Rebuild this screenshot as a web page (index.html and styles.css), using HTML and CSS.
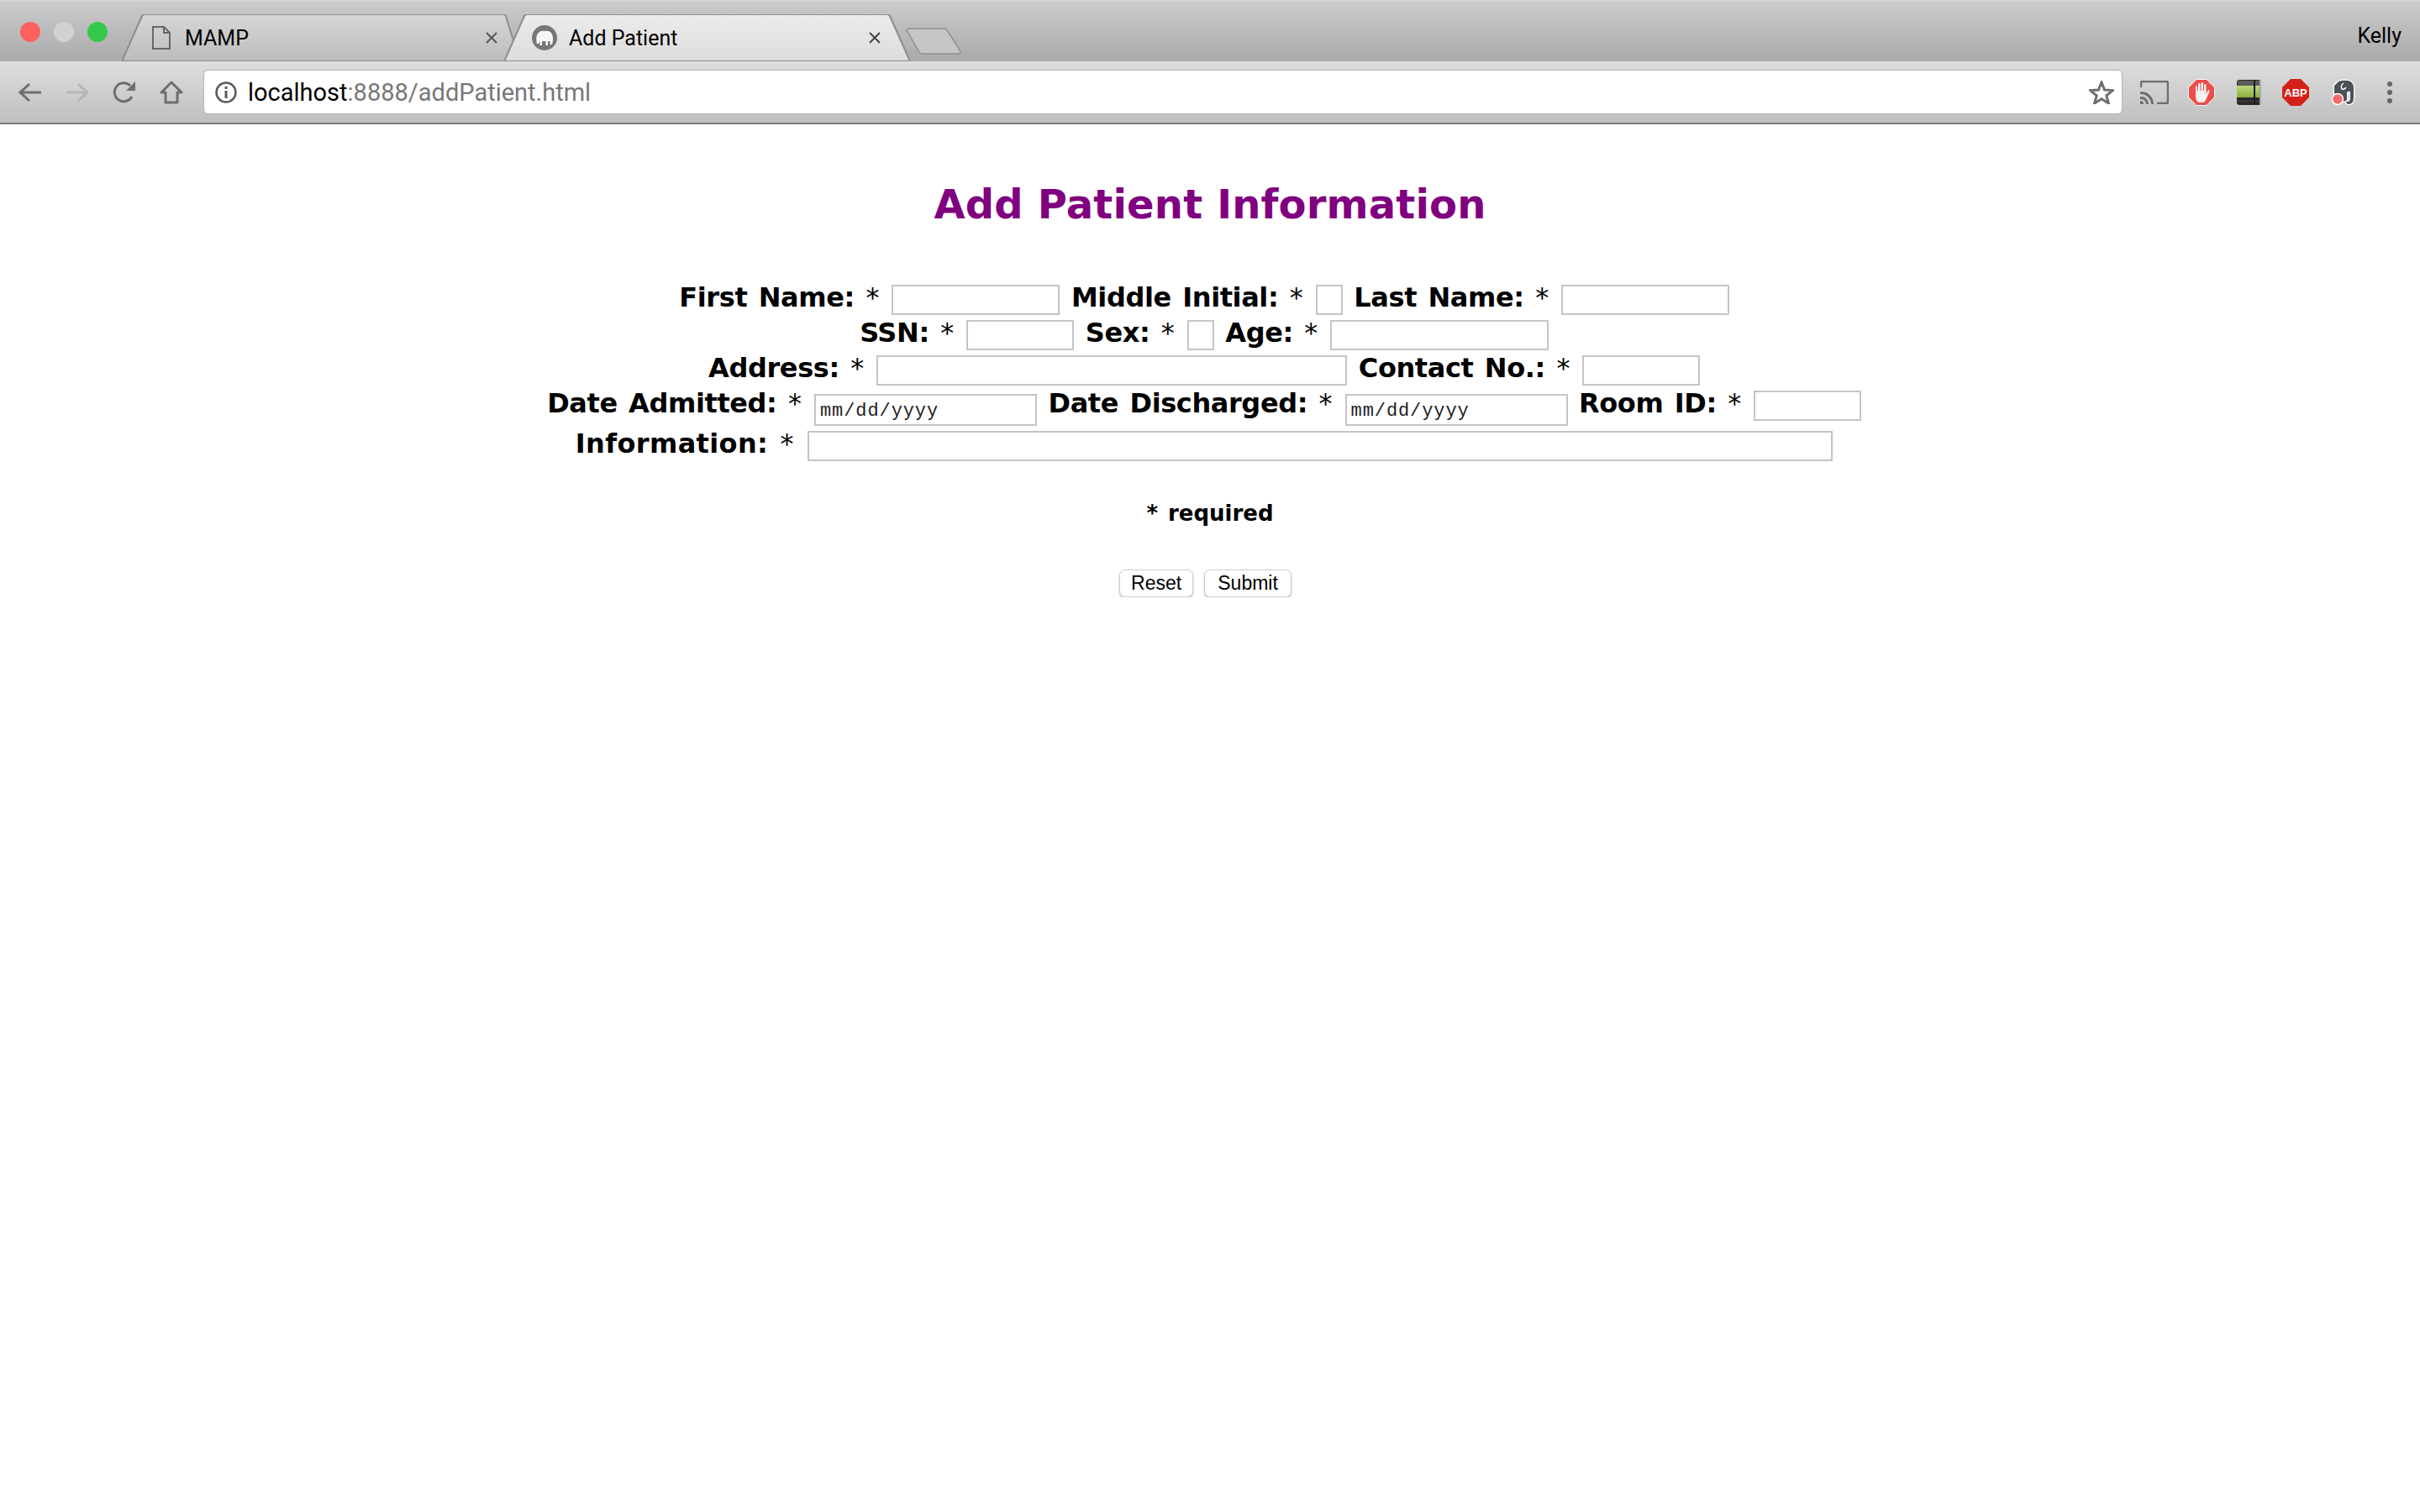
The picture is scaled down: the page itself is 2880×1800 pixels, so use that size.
FILE: index.html
```html
<!DOCTYPE html>
<html lang="en">
<head>
    <meta charset="UTF-8">
    <title>Add Patient</title>
    <link rel="stylesheet" href="styles.css">
</head>
<body>
    <header class="browser">
        <div class="tabstrip">
            <div class="lights">
                <span class="light red"></span>
                <span class="light grey"></span>
                <span class="light green"></span>
            </div>
            <div class="tab tab-back">
                <svg class="tab-shape" viewBox="0 0 468 56" preserveAspectRatio="none"><path d="M0 56 L24 2 Q25 0 28 0 L454 0 Q456 0 457 2 L468 38 V56 Z" fill="url(#backTab)" stroke="#8c8c8c" stroke-width="2"/><defs><linearGradient id="backTab" x1="0" y1="0" x2="0" y2="1"><stop offset="0" stop-color="#d6d6d6"/><stop offset="1" stop-color="#bcbcbc"/></linearGradient></defs></svg>
                <svg class="tab-icon" width="22" height="28" viewBox="0 0 22 28"><path d="M1 1 H14 L21 8 V27 H1 Z M14 1 V8 H21" fill="none" stroke="#666" stroke-width="2"/></svg>
                <span class="tab-title">MAMP</span>
                <svg class="tab-close" width="16" height="16" viewBox="0 0 16 16"><path d="M2 2 L14 14 M14 2 L2 14" stroke="#555" stroke-width="2"/></svg>
            </div>
            <div class="tab tab-active">
                <svg class="tab-shape" viewBox="0 0 483 56" preserveAspectRatio="none"><path d="M0 56 L24 2 Q25 0 28 0 L456 0 Q458 0 459 2 L483 56 Z" fill="url(#activeTab)" stroke="#8c8c8c" stroke-width="2"/><defs><linearGradient id="activeTab" x1="0" y1="0" x2="0" y2="1"><stop offset="0" stop-color="#ececec"/><stop offset="1" stop-color="#dcdcdc"/></linearGradient></defs></svg>
                <svg class="tab-icon" width="30" height="30" viewBox="0 0 30 30"><circle cx="15" cy="15" r="15" fill="#777"/><path d="M6 22 Q4 14 7 10 Q10 6 15 7 Q22 6 24 11 Q26 16 24 23 H21.500 V19 H19 V24 H16.500 V19 H12 V24 H9.500 V19 L8 22 Z" fill="#f6f6f6"/></svg>
                <span class="tab-title">Add Patient</span>
                <svg class="tab-close" width="16" height="16" viewBox="0 0 16 16"><path d="M2 2 L14 14 M14 2 L2 14" stroke="#444" stroke-width="2"/></svg>
            </div>
            <svg class="new-tab" width="66" height="32" viewBox="0 0 66 32"><path d="M1 3 Q1 1 4 1 L46 1 Q48 1 49 3 L65 28 Q65 31 62 31 L20 31 Q17 31 16 29 Z" fill="#c6c6c6" stroke="#8f8f8f" stroke-width="1.5"/></svg>
            <span class="profile">Kelly</span>
        </div>
        <div class="toolbar">
            <span class="slot">
                <svg width="28" height="24" viewBox="0 0 28 24"><path d="M13 2 L2 12 L13 22 M2 12 H27" fill="none" stroke="#6e6e6e" stroke-width="3"/></svg>
            </span>
            <span class="slot">
                <svg width="28" height="24" viewBox="0 0 28 24"><path d="M15 2 L26 12 L15 22 M26 12 H1" fill="none" stroke="#b6b6b6" stroke-width="3"/></svg>
            </span>
            <span class="slot">
                <svg width="28" height="28" viewBox="0 0 28 28"><path d="M23 19 A11 11 0 1 1 21 6" fill="none" stroke="#6e6e6e" stroke-width="3"/><path d="M27 1 V12 H16 Z" fill="#6e6e6e"/></svg>
            </span>
            <span class="slot">
                <svg width="28" height="28" viewBox="0 0 28 28"><path d="M14 2 L26 14 H21 V26 H7 V14 H2 Z" fill="none" stroke="#6e6e6e" stroke-width="3" stroke-linejoin="round"/></svg>
            </span>
            <div class="omnibox">
                <svg class="info" width="26" height="26" viewBox="0 0 26 26"><circle cx="13" cy="13" r="11.5" fill="none" stroke="#5a5a5a" stroke-width="2.5"/><path d="M13 11 V20 M13 6 V9" stroke="#5a5a5a" stroke-width="3"/></svg>
                <span class="url"><span class="url-host">localhost</span>:8888/addPatient.html</span>
                <svg class="star" width="30" height="28" viewBox="0 0 30 28"><path d="M15 2 L18.6 11 L28.5 11.6 L20.8 17.8 L23.4 27 L15 21.8 L6.6 27 L9.2 17.8 L1.5 11.6 L11.4 11 Z" fill="none" stroke="#6e6e6e" stroke-width="3"/></svg>
            </div>
            <span class="slot">
                <svg width="34" height="28" viewBox="0 0 34 28"><path d="M1 8 V3 Q1 1 3 1 H31 Q33 1 33 3 V25 Q33 27 31 27 H20" fill="none" stroke="#6e6e6e" stroke-width="2.5"/><path d="M0 13 A15 15 0 0 1 16 28 H13 A12 12 0 0 0 0 16 Z M0 19 A9 9 0 0 1 10 28 H7 A6 6 0 0 0 0 22 Z M0 24 A4 4 0 0 1 4 28 H0 Z" fill="#6e6e6e"/></svg>
            </span>
            <span class="slot">
                <svg width="32" height="32" viewBox="0 0 32 32"><path d="M10 0.5 H22 L31.5 10 V22 L22 31.5 H10 L0.5 22 V10 Z" fill="#ee4c48" stroke="#fff"/><path d="M9 15 V9 Q10 7 11 9 V14 H12 V6 Q13 4 14.500 6 V14 H15.500 V5 Q17 3 18 5 V14 H19 V7 Q20.500 5 21.500 7 V18 L24 13 Q26 13 25.500 15 L21 25 Q20 28 17 28 H14 Q10 28 9 22 Z" fill="#f2f2f2"/></svg>
            </span>
            <span class="slot">
                <svg width="29" height="30" viewBox="0 0 29 30"><rect width="29" height="30" rx="3" fill="#2a2a2a"/><rect x="1" y="1" width="26" height="6" fill="#5c5c5c"/><rect y="7" width="29" height="14" fill="url(#noteGreen)"/><rect y="25" width="29" height="1" fill="#444"/><rect x="20" width="2" height="30" fill="#1c1c1c"/><rect x="27" width="2" height="30" fill="#aaa"/><defs><linearGradient id="noteGreen" x1="0" y1="0" x2="0" y2="1"><stop offset="0" stop-color="#bcd97c"/><stop offset="1" stop-color="#8cac3e"/></linearGradient></defs></svg>
            </span>
            <span class="slot">
                <svg width="32" height="32" viewBox="0 0 32 32"><path d="M10 0 H22 L32 10 V22 L22 32 H10 L0 22 V10 Z" fill="#d4201a"/><text class="abp" x="16" y="20.500" text-anchor="middle">ABP</text></svg>
            </span>
            <span class="slot">
                <svg width="30" height="32" viewBox="0 0 30 32"><path d="M5 8 L10 3 Q15 1 22 2 Q28 4 28 11 V22 Q28 30 22 30 Q19 30 19 27 H21 Q24 27 24 23 V15 Q22 14 20 16 V25 Q16 28 12 27 L5 17 Z" fill="#4a5256" stroke="#fff" stroke-width="2.500" stroke-linejoin="round" paint-order="stroke"/><path d="M16 5 Q12 8 14 12 Q17 13 19 10" fill="none" stroke="#fff" stroke-width="1.500"/><circle cx="9" cy="24" r="6.500" fill="#f8696f" stroke="#fff" stroke-width="1.500"/></svg>
            </span>
            <span class="slot">
                <svg width="6" height="26" viewBox="0 0 6 26"><circle cx="3" cy="3" r="3" fill="#666"/><circle cx="3" cy="13" r="3" fill="#666"/><circle cx="3" cy="23" r="3" fill="#666"/></svg>
            </span>
        </div>
    </header>

    <main class="page">
        <h1 class="title">Add Patient Information</h1>
        <form class="patient-form" action="#" method="POST">
            <div class="row">
                <label>First Name: <span class="star-mark">*</span> <input class="w200" type="text"></label>
                <label>Middle Initial: <span class="star-mark">*</span> <input class="w32" type="text"></label>
                <label>Last Name: <span class="star-mark">*</span> <input class="w200" type="text"></label>&nbsp;
            </div>
            <div class="row">
                <label>SSN: <span class="star-mark">*</span> <input class="w128" type="text"></label>
                <label>Sex: <span class="star-mark">*</span> <input class="w32" type="text"></label>
                <label>Age: <span class="star-mark">*</span> <input class="w260" type="text"></label>&nbsp;
            </div>
            <div class="row">
                <label>Address: <span class="star-mark">*</span> <input class="w560" type="text"></label>
                <label>Contact No.: <span class="star-mark">*</span> <input class="w140" type="text"></label>&nbsp;
            </div>
            <div class="row row-dates">
                <label>Date Admitted: <span class="star-mark">*</span> <input class="date" type="text" value="mm/dd/yyyy"></label>
                <label>Date Discharged: <span class="star-mark">*</span> <input class="date" type="text" value="mm/dd/yyyy"></label>
                <label>Room ID: <span class="star-mark">*</span> <input class="w128" type="text"></label>&nbsp;
            </div>
            <div class="row row-info">
                <label>Information: <span class="star-mark">*</span> <input class="w1220" type="text"></label>&nbsp;
            </div>
            <p class="required">* required</p>
            <div class="actions">
                <input class="btn" type="reset" value="Reset">
                <input class="btn btn-submit" type="submit" value="Submit">&nbsp;
            </div>
        </form>
    </main>
</body>
</html>
```

FILE: styles.css
```css
body {
    margin: 0;
    background-color: #fff;
    color: #000;
    font-family: "DejaVu Sans", sans-serif;
}

.browser {
    font-family: Roboto, "Liberation Sans", sans-serif;
}

.tabstrip {
    display: flex;
    align-items: flex-end;
    height: 73px;
    box-sizing: border-box;
    padding-left: 24px;
    border-top: 2px solid #d6d6d6;
    background: linear-gradient(#cbcbcb, #aaaaaa);
}

.lights {
    display: flex;
    gap: 16px;
    width: 121px;
    align-self: flex-start;
    padding-top: 24px;
}

.light {
    width: 24px;
    height: 24px;
    border-radius: 50%;
}

.red { background-color: #fc615d; }
.grey { background-color: #d2d2d2; }
.green { background-color: #34c84a; }

.tab {
    position: relative;
    display: flex;
    align-items: center;
    height: 56px;
    font-size: 25px;
}

.tab-shape {
    position: absolute;
    top: 0;
    left: 0;
    width: 100%;
    height: 100%;
}

.tab > *:not(.tab-shape) {
    position: relative;
}

.tab-back {
    width: 468px;
    padding-left: 36px;
    padding-right: 20px;
    box-sizing: border-box;
}

.tab-active {
    width: 483px;
    margin-left: -13px;
    padding-left: 33px;
    padding-right: 34px;
    box-sizing: border-box;
}

.tab-title {
    flex: 1;
    margin-left: 16px;
    color: #000;
}

.tab-active .tab-title {
    margin-left: 14px;
}

.tab-back .tab-title {
    margin-left: 17px;
}

.new-tab {
    align-self: flex-start;
    margin-top: 31px;
    margin-left: -5px;
}

.profile {
    align-self: flex-start;
    margin-left: auto;
    margin-top: 26px;
    margin-right: 22px;
    font-size: 25px;
}

.toolbar {
    display: flex;
    align-items: center;
    height: 75px;
    box-sizing: border-box;
    padding: 0 8px;
    border-bottom: 2px solid #7a7a7a;
    background: linear-gradient(#dedede, #bfbfbf);
}

.slot {
    display: flex;
    align-items: center;
    justify-content: center;
    width: 56px;
    flex-shrink: 0;
}

.omnibox {
    flex: 1;
    display: flex;
    align-items: center;
    height: 53px;
    box-sizing: border-box;
    margin: 0 10px;
    padding: 0 9px 0 13px;
    background-color: #fff;
    border: 1px solid #b4b4b4;
    border-radius: 6px;
}

.url {
    flex: 1;
    margin-left: 13px;
    padding-top: 1px;
    font-size: 29px;
    color: #777;
}

.url-host {
    color: #000;
}

.abp {
    font-family: "Liberation Sans", sans-serif;
    font-size: 13px;
    font-weight: bold;
    fill: #fff;
}

.title {
    margin: 0;
    padding-top: 66px;
    text-align: center;
    font-size: 48px;
    line-height: 58px;
    letter-spacing: 0.17px;
    color: #800080;
}

.patient-form {
    margin-top: 61px;
    text-align: center;
    font-size: 32px;
    font-weight: bold;
    letter-spacing: -0.4px;
    word-spacing: 2.7px;
}

.star-mark {
    font-weight: normal;
}

.row {
    height: 42px;
    line-height: 42px;
    white-space: nowrap;
}

.row-dates {
    height: 48px;
}

.row-info {
    letter-spacing: 0.35px;
}

input {
    box-sizing: border-box;
    height: 36px;
    margin: 0 0 0 2px;
    padding: 0 6px;
    font-size: 26px;
    border: 2px solid #c4c4c4;
    background-color: #fff;
}

.w32 { width: 32px; }
.w128 { width: 128px; }
.w140 { width: 140px; }
.w200 { width: 200px; }
.w260 { width: 260px; }
.w560 { width: 560px; }
.w1220 { width: 1220px; }

.date {
    width: 265px;
    height: 38px;
    padding: 4px 5px 0;
    vertical-align: -4px;
    font-family: "Liberation Mono", monospace;
    font-size: 22px;
    letter-spacing: 0.9px;
    color: #222;
}

.required {
    margin: 44px 0 0;
    font-size: 26px;
    line-height: 36px;
    letter-spacing: 0;
    word-spacing: 3px;
}

.actions {
    margin-top: 43px;
    padding-right: 2px;
    word-spacing: 0;
    letter-spacing: 0;
}

.btn {
    height: 33px;
    margin: 0 0 0 2px;
    padding: 0 13px;
    font-family: "Liberation Sans", sans-serif;
    font-size: 23px;
    font-weight: normal;
    color: #000;
    background-color: #fff;
    border: 1px solid #cfcfcf;
    border-radius: 7px;
    box-shadow: 0 1px 2px rgba(0, 0, 0, 0.3);
}

.btn-submit {
    padding: 0 15px;
}
```
